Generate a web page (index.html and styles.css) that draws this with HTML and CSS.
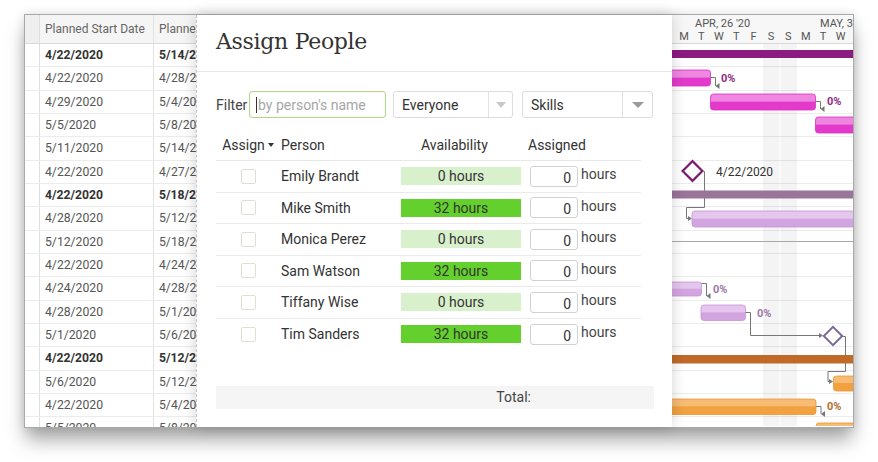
FILE: index.html
```html
<!DOCTYPE html>
<html>
<head>
<meta charset="utf-8">
<link rel="stylesheet" href="styles.css">
</head>
<body>
<div class="window">
  <div class="grid">
    <div class="grid-head">
      <div class="c0"></div><div class="c1">Planned Start Date</div><div class="c2">Planned Finish Date</div>
    </div>
    <div class="grid-row bold"><div class="c0"></div><div class="c1">4/22/2020</div><div class="c2">5/14/2020</div></div>
    <div class="grid-row"><div class="c0"></div><div class="c1">4/22/2020</div><div class="c2">4/28/2020</div></div>
    <div class="grid-row"><div class="c0"></div><div class="c1">4/29/2020</div><div class="c2">5/4/2020</div></div>
    <div class="grid-row"><div class="c0"></div><div class="c1">5/5/2020</div><div class="c2">5/8/2020</div></div>
    <div class="grid-row"><div class="c0"></div><div class="c1">5/11/2020</div><div class="c2">5/14/2020</div></div>
    <div class="grid-row"><div class="c0"></div><div class="c1">4/22/2020</div><div class="c2">4/27/2020</div></div>
    <div class="grid-row bold"><div class="c0"></div><div class="c1">4/22/2020</div><div class="c2">5/18/2020</div></div>
    <div class="grid-row"><div class="c0"></div><div class="c1">4/28/2020</div><div class="c2">5/12/2020</div></div>
    <div class="grid-row"><div class="c0"></div><div class="c1">5/12/2020</div><div class="c2">5/18/2020</div></div>
    <div class="grid-row"><div class="c0"></div><div class="c1">4/22/2020</div><div class="c2">4/24/2020</div></div>
    <div class="grid-row"><div class="c0"></div><div class="c1">4/24/2020</div><div class="c2">4/28/2020</div></div>
    <div class="grid-row"><div class="c0"></div><div class="c1">4/28/2020</div><div class="c2">5/1/2020</div></div>
    <div class="grid-row"><div class="c0"></div><div class="c1">5/1/2020</div><div class="c2">5/6/2020</div></div>
    <div class="grid-row bold"><div class="c0"></div><div class="c1">4/22/2020</div><div class="c2">5/12/2020</div></div>
    <div class="grid-row"><div class="c0"></div><div class="c1">5/6/2020</div><div class="c2">5/12/2020</div></div>
    <div class="grid-row"><div class="c0"></div><div class="c1">4/22/2020</div><div class="c2">5/4/2020</div></div>
    <div class="grid-row"><div class="c0"></div><div class="c1">5/5/2020</div><div class="c2">5/8/2020</div></div>
  </div>

  <div class="dialog">
    <div class="dlg-title">Assign People</div>
    <div class="filter-row">
      <span class="filter-label">Filter</span>
      <div class="text-input"><span class="caret"></span><span class="placeholder">by person's name</span></div>
      <div class="select sel-everyone"><span class="sel-text">Everyone</span><span class="sel-btn"><i class="tri tri-light"></i></span></div>
      <div class="select sel-skills"><span class="sel-text">Skills</span><span class="sel-btn"><i class="tri tri-dark"></i></span></div>
    </div>
    <div class="people">
      <div class="p-head">
        <div class="col-assign">Assign<i class="tri-s"></i></div>
        <div class="col-person">Person</div>
        <div class="col-avail">Availability</div>
        <div class="col-assigned">Assigned</div>
      </div>
      <div class="p-row">
        <div class="col-assign"><span class="check"></span></div>
        <div class="col-person">Emily Brandt</div>
        <div class="col-avail"><span class="avail avail-none">0 hours</span></div>
        <div class="col-assigned"><span class="num">0</span><span class="unit">hours</span></div>
      </div>
      <div class="p-row">
        <div class="col-assign"><span class="check"></span></div>
        <div class="col-person">Mike Smith</div>
        <div class="col-avail"><span class="avail avail-full">32 hours</span></div>
        <div class="col-assigned"><span class="num">0</span><span class="unit">hours</span></div>
      </div>
      <div class="p-row">
        <div class="col-assign"><span class="check"></span></div>
        <div class="col-person">Monica Perez</div>
        <div class="col-avail"><span class="avail avail-none">0 hours</span></div>
        <div class="col-assigned"><span class="num">0</span><span class="unit">hours</span></div>
      </div>
      <div class="p-row">
        <div class="col-assign"><span class="check"></span></div>
        <div class="col-person">Sam Watson</div>
        <div class="col-avail"><span class="avail avail-full">32 hours</span></div>
        <div class="col-assigned"><span class="num">0</span><span class="unit">hours</span></div>
      </div>
      <div class="p-row">
        <div class="col-assign"><span class="check"></span></div>
        <div class="col-person">Tiffany Wise</div>
        <div class="col-avail"><span class="avail avail-none">0 hours</span></div>
        <div class="col-assigned"><span class="num">0</span><span class="unit">hours</span></div>
      </div>
      <div class="p-row">
        <div class="col-assign"><span class="check"></span></div>
        <div class="col-person">Tim Sanders</div>
        <div class="col-avail"><span class="avail avail-full">32 hours</span></div>
        <div class="col-assigned"><span class="num">0</span><span class="unit">hours</span></div>
      </div>
    </div>
    <div class="total"><span>Total:</span></div>
  </div>

  <div class="gantt">
    <div class="gantt-head">
      <div class="weeks"><span class="wk1">APR, 26 '20</span><span class="wk2">MAY, 3 '20</span></div>
      <div class="days"><span>M</span><span>T</span><span>W</span><span>T</span><span>F</span><span>S</span><span>S</span><span>M</span><span>T</span><span>W</span><span>T</span></div>
    </div>
    <div class="gantt-body">
      <div class="g-row"></div><div class="g-row"></div><div class="g-row"></div><div class="g-row"></div>
      <div class="g-row"></div><div class="g-row"></div><div class="g-row"></div><div class="g-row"></div>
      <div class="g-row"></div><div class="g-row"></div><div class="g-row"></div><div class="g-row"></div>
      <div class="g-row"></div><div class="g-row"></div><div class="g-row"></div><div class="g-row"></div>
      <div class="g-row"></div>
      <svg class="chart" width="181" height="382" viewBox="0 0 181 382">
        <defs>
          <marker id="ad" markerWidth="6" markerHeight="6" refX="3" refY="5" orient="auto-start-reverse" markerUnits="userSpaceOnUse"><path d="M0,1 L6,1 L3,5 Z" fill="#777"/></marker>
          <linearGradient id="gm" x1="0" y1="0" x2="0" y2="1"><stop offset="0" stop-color="#ef86e0"/><stop offset=".45" stop-color="#ef86e0"/><stop offset=".5" stop-color="#e33acb"/><stop offset="1" stop-color="#e33acb"/></linearGradient>
          <linearGradient id="gl" x1="0" y1="0" x2="0" y2="1"><stop offset="0" stop-color="#e4c6ee"/><stop offset=".45" stop-color="#e4c6ee"/><stop offset=".5" stop-color="#d3a5e0"/><stop offset="1" stop-color="#d3a5e0"/></linearGradient>
          <linearGradient id="go" x1="0" y1="0" x2="0" y2="1"><stop offset="0" stop-color="#f7bb74"/><stop offset=".45" stop-color="#f7bb74"/><stop offset=".5" stop-color="#f2a140"/><stop offset="1" stop-color="#f2a140"/></linearGradient>
        </defs>
        <g transform="translate(-672,-44)">
          <rect x="763" y="44" width="16.5" height="383" fill="rgba(0,0,0,0.045)"/>
          <rect x="780.5" y="44" width="16.5" height="383" fill="rgba(0,0,0,0.045)"/>
          <line x1="672" y1="241.5" x2="853" y2="241.5" stroke="#a8a8a8" stroke-width="1"/>

          <rect x="660" y="50" width="200" height="8" fill="#8c1b80"/>
          <rect x="660" y="70" width="50.5" height="16" rx="3" fill="url(#gm)" stroke="#dc2ec4" stroke-width="0.8"/>
          <path d="M710.5,77.5 H715.5 V86" fill="none" stroke="#777" marker-end="url(#ad)"/>
          <text x="721" y="82" class="pct pct-m">0%</text>

          <rect x="710.5" y="94" width="105" height="16" rx="3" fill="url(#gm)" stroke="#dc2ec4" stroke-width="0.8"/>
          <path d="M815.5,101.5 H820.5 V109" fill="none" stroke="#777" marker-end="url(#ad)"/>
          <text x="827" y="105" class="pct pct-m">0%</text>

          <rect x="815.5" y="117" width="60" height="16" rx="3" fill="url(#gm)" stroke="#dc2ec4" stroke-width="0.8"/>

          <rect x="685.5" y="164" width="14" height="14" transform="rotate(45 692.5 171)" fill="#fff" stroke="#7d1a72" stroke-width="2.2"/>
          <path d="M702.5,171.5 H704.5 V207.5 H686.5 V218.5 H688" fill="none" stroke="#777"/>
          <path d="M688,216 L692,218.5 L688,221 Z" fill="#777"/>
          <text x="716" y="176" class="mdate">4/22/2020</text>

          <rect x="660" y="190.5" width="200" height="8" fill="#9b7499"/>
          <rect x="692" y="211" width="170" height="16" rx="3" fill="url(#gl)" stroke="#c693d6" stroke-width="0.8"/>

          <rect x="660" y="282" width="41.5" height="14" rx="3" fill="url(#gl)" stroke="#c693d6" stroke-width="0.8"/>
          <path d="M701.5,283.5 H706.5 V296" fill="none" stroke="#777" marker-end="url(#ad)"/>
          <text x="713" y="293" class="pct pct-l">0%</text>

          <rect x="701" y="305" width="44.5" height="15.5" rx="3" fill="url(#gl)" stroke="#c693d6" stroke-width="0.8"/>
          <path d="M745.5,312.5 H750.5 V335.5 H820" fill="none" stroke="#777"/>
          <path d="M819,333 L823,335.5 L819,338 Z" fill="#777"/>
          <text x="757" y="316.5" class="pct pct-l">0%</text>

          <rect x="826.5" y="329.5" width="13" height="13" transform="rotate(45 833 336)" fill="#fff" stroke="#7a6a98" stroke-width="2"/>
          <path d="M842,336.5 H845.5 V371.5 H828 V381.5 H829" fill="none" stroke="#777"/>
          <path d="M829,379 L833,381.5 L829,384 Z" fill="#777"/>

          <rect x="660" y="355" width="200" height="8.5" fill="#c06a29"/>
          <rect x="833.5" y="376" width="40" height="15" rx="3" fill="url(#go)" stroke="#eb9530" stroke-width="0.8"/>

          <rect x="660" y="399" width="156" height="15.5" rx="3" fill="url(#go)" stroke="#eb9530" stroke-width="0.8"/>
          <path d="M816,406.5 H821 V414" fill="none" stroke="#777" marker-end="url(#ad)"/>
          <text x="827" y="410" class="pct pct-o">0%</text>

          <rect x="816" y="423" width="60" height="15" rx="3" fill="url(#go)" stroke="#eb9530" stroke-width="0.8"/>
        </g>
      </svg>
    </div>
  </div>
</div>
</body>
</html>
```

FILE: styles.css
```css
* { box-sizing: border-box; margin: 0; padding: 0; }

html, body {
  background: #fff;
  width: 878px;
  height: 462px;
  overflow: hidden;
}

body {
  font-family: Roboto, "Liberation Sans", sans-serif;
  color: #333;
}

.window {
  margin: 14px 0 0 24px;
  width: 830px;
  height: 414px;
  border: 1px solid #a9a9a9;
  display: flex;
  background: #fff;
  box-shadow: 0 14px 18px -2px rgba(0, 0, 0, 0.34), 0 0 10px rgba(0, 0, 0, 0.12);
}

/* ---------- left grid ---------- */
.grid {
  width: 171px;
  flex: none;
  overflow: hidden;
}

.grid-head {
  display: flex;
  height: 29px;
  background: #f5f5f5;
  border-bottom: 1px solid #d9d9d9;
  font-size: 12px;
  color: #666;
  line-height: 28px;
  white-space: nowrap;
}

.grid-row {
  display: flex;
  height: 23.33px;
  border-bottom: 1px solid #ececec;
  font-size: 12.2px;
  color: #555;
  line-height: 22px;
  white-space: nowrap;
}

.grid-row.bold { font-weight: 700; color: #333; }

.c0 { width: 15px; flex: none; border-right: 1px solid #dedede; }
.grid-head .c0 { background: #efefef; }
.c1 { width: 114px; flex: none; padding-left: 5px; border-right: 1px solid #e2e2e2; }
.c2 { flex: none; width: 42px; padding-left: 5px; overflow: hidden; }

/* ---------- dialog ---------- */
.dialog {
  width: 476px;
  flex: none;
  position: relative;
  z-index: 2;
  background: #fff;
  border-left: 1px dashed #c4c4c4;
  box-shadow: 0 0 14px rgba(0, 0, 0, 0.18);
}

.dlg-title {
  height: 57px;
  padding: 12px 0 0 19px;
  font-family: "DejaVu Serif", serif;
  font-size: 22px;
  letter-spacing: -0.3px;
  line-height: 30px;
  color: #333;
  border-bottom: 1px solid #e8e8e8;
}

.filter-row {
  display: flex;
  align-items: center;
  margin-top: 19px;
  padding-left: 19px;
  height: 27px;
  font-size: 14px;
}

.filter-label {
  width: 33px;
  color: #444;
}

.text-input {
  width: 137px;
  height: 27px;
  border: 1px solid #b6d58e;
  border-radius: 3px;
  display: flex;
  align-items: center;
  padding-left: 6px;
  box-shadow: inset 0 0 2px rgba(150, 200, 100, 0.25);
}

.caret {
  width: 1px;
  height: 16px;
  background: #333;
  margin-right: 1px;
}

.placeholder { color: #a6a6a6; }

.select {
  height: 27px;
  border: 1px solid #dcdcdc;
  border-radius: 3px;
  display: flex;
  align-items: center;
  color: #333;
}

.sel-everyone { width: 120px; margin-left: 7px; }
.sel-skills { width: 131px; margin-left: 9px; }

.sel-text { flex: 1; padding-left: 8px; }

.sel-btn {
  height: 100%;
  border-left: 1px solid #e2e2e2;
  display: flex;
  align-items: center;
  justify-content: center;
}

.sel-everyone .sel-btn { width: 24px; }
.sel-skills .sel-btn { width: 30px; }

.tri {
  width: 0;
  height: 0;
  border-left: 5px solid transparent;
  border-right: 5px solid transparent;
  border-top: 6px solid #c8c8c8;
}

.tri-dark {
  border-left-width: 6px;
  border-right-width: 6px;
  border-top: 6px solid #9a9a9a;
}

/* people table */
.people {
  margin: 15px 0 0 19px;
  width: 425px;
  font-size: 14px;
}

.p-head {
  display: flex;
  height: 28px;
  line-height: 24px;
  border-bottom: 1px solid #e8e8e8;
  color: #333;
}

.p-row {
  display: flex;
  align-items: center;
  height: 31.5px;
  border-bottom: 1px solid #ebebeb;
}

.p-row:last-child { border-bottom: none; }

.col-assign {
  width: 64px;
  flex: none;
  display: flex;
  justify-content: center;
  align-items: center;
}

.p-head .col-assign { align-items: center; height: 24px; }

.tri-s {
  display: inline-block;
  width: 0;
  height: 0;
  border-left: 3.5px solid transparent;
  border-right: 3.5px solid transparent;
  border-top: 4px solid #333;
  margin-left: 3px;
}

.col-person {
  width: 121px;
  flex: none;
  padding-left: 1px;
  color: #333;
}

.col-avail {
  width: 120px;
  flex: none;
}

.p-head .col-avail { padding-left: 20px; }

.col-assigned {
  flex: 1;
  margin-left: 9px;
  display: flex;
  align-items: center;
}

.p-head .col-assigned { display: block; margin-left: 7px; }

.check {
  width: 15px;
  height: 15px;
  border: 1px solid #dde1d2;
  border-radius: 2px;
  background: #fff;
}

.avail {
  display: block;
  height: 18px;
  line-height: 18px;
  text-align: center;
  color: #333;
}

.avail-none { background: #d9f0cc; }
.avail-full { background: #63d02d; }

.num {
  width: 48px;
  height: 21px;
  border: 1px solid #d2d2d2;
  border-radius: 3px;
  text-align: right;
  padding-right: 6px;
  line-height: 21px;
  padding-top: 1px;
  color: #333;
}

.unit {
  margin-left: 3px;
  margin-bottom: 4px;
  color: #444;
}

.total {
  margin: 36px 0 0 19px;
  width: 438px;
  height: 23px;
  background: #f5f5f5;
  font-size: 14px;
  line-height: 23px;
  text-align: right;
  padding-right: 123px;
  color: #444;
}

/* ---------- gantt ---------- */
.gantt {
  flex: 1;
  overflow: hidden;
  position: relative;
  z-index: 1;
}

.gantt-head {
  height: 29px;
  background: #f7f7f7;
  border-bottom: 1px solid #d9d9d9;
  padding-top: 2px;
  font-size: 11px;
  color: #555;
  white-space: nowrap;
}

.weeks {
  height: 13px;
  line-height: 13px;
  padding-left: 23px;
  display: flex;
}

.wk1 { width: 125px; flex: none; }
.wk2 { overflow: hidden; }

.days {
  height: 13px;
  line-height: 13px;
  padding-left: 3.3px;
  display: flex;
}

.days span {
  width: 17.4px;
  flex: none;
  text-align: center;
}

.gantt-body {
  position: relative;
  height: 382px;
}

.g-row {
  height: 23.33px;
  border-bottom: 1px solid #ececec;
}

.chart {
  position: absolute;
  left: 0;
  top: 0;
}

.pct {
  font-family: Roboto, "Liberation Sans", sans-serif;
  font-size: 11px;
  font-weight: 700;
}

.pct-m { fill: #8e2c82; }
.pct-l { fill: #9c77a6; }
.pct-o { fill: #b36e2d; }

.mdate {
  font-family: Roboto, "Liberation Sans", sans-serif;
  font-size: 12px;
  fill: #333;
}
```
